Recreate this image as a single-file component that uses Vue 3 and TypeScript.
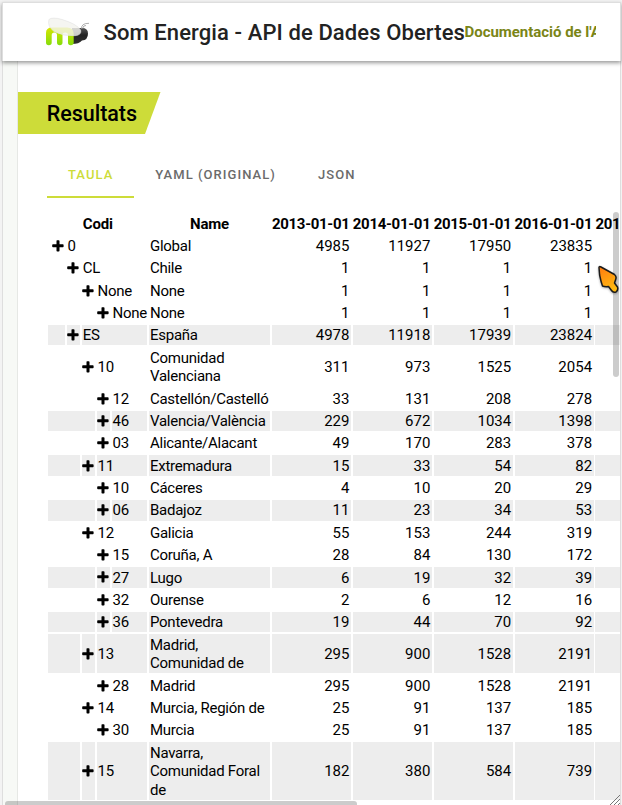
<script setup lang="ts">
interface Row {
  level: number
  code: string
  name: string
  values: number[]
  lines?: number
  shaded?: boolean
}

const dates: string[] = ['2013-01-01', '2014-01-01', '2015-01-01', '2016-01-01', '2017-01-01']

const rows: Row[] = [
  { level: 0, code: '0', name: 'Global', values: [4985, 11927, 17950, 23835] },
  { level: 1, code: 'CL', name: 'Chile', values: [1, 1, 1, 1] },
  { level: 2, code: 'None', name: 'None', values: [1, 1, 1, 1] },
  { level: 3, code: 'None', name: 'None', values: [1, 1, 1, 1] },
  { level: 1, code: 'ES', name: 'España', values: [4978, 11918, 17939, 23824], shaded: true },
  { level: 2, code: '10', name: 'Comunidad Valenciana', values: [311, 973, 1525, 2054], lines: 2 },
  { level: 3, code: '12', name: 'Castellón/Castelló', values: [33, 131, 208, 278] },
  { level: 3, code: '46', name: 'Valencia/València', values: [229, 672, 1034, 1398], shaded: true },
  { level: 3, code: '03', name: 'Alicante/Alacant', values: [49, 170, 283, 378] },
  { level: 2, code: '11', name: 'Extremadura', values: [15, 33, 54, 82], shaded: true },
  { level: 3, code: '10', name: 'Cáceres', values: [4, 10, 20, 29] },
  { level: 3, code: '06', name: 'Badajoz', values: [11, 23, 34, 53], shaded: true },
  { level: 2, code: '12', name: 'Galicia', values: [55, 153, 244, 319] },
  { level: 3, code: '15', name: 'Coruña, A', values: [28, 84, 130, 172] },
  { level: 3, code: '27', name: 'Lugo', values: [6, 19, 32, 39], shaded: true },
  { level: 3, code: '32', name: 'Ourense', values: [2, 6, 12, 16] },
  { level: 3, code: '36', name: 'Pontevedra', values: [19, 44, 70, 92], shaded: true },
  { level: 2, code: '13', name: 'Madrid, Comunidad de', values: [295, 900, 1528, 2191], lines: 2, shaded: true },
  { level: 3, code: '28', name: 'Madrid', values: [295, 900, 1528, 2191] },
  { level: 2, code: '14', name: 'Murcia, Región de', values: [25, 91, 137, 185] },
  { level: 3, code: '30', name: 'Murcia', values: [25, 91, 137, 185] },
  { level: 2, code: '15', name: 'Navarra, Comunidad Foral de', values: [182, 380, 584, 739], lines: 3, shaded: true },
]
</script>

<template>
  <div class="window">
    <header class="bar">
      <svg class="logo" viewBox="0 0 44 30">
        <defs>
          <linearGradient id="green" x1="0" y1="0" x2="0" y2="1">
            <stop offset="0" stop-color="#d8e600" />
            <stop offset="1" stop-color="#84dc0c" />
          </linearGradient>
          <linearGradient id="dark" x1="0" y1="0" x2="0" y2="1">
            <stop offset="0" stop-color="#555" />
            <stop offset=".45" stop-color="#222" />
            <stop offset="1" stop-color="#303030" />
          </linearGradient>
        </defs>
        <path d="M26 11H35Q42 10.500 42 16.500Q42 23 36 23.500Q33 27 26 27Z" fill="url(#dark)" />
        <path d="M0 16Q0 10.500 6 10.500H21Q27.700 10.500 27.700 17V25.500Q27.700 28.300 24.700 28.300Q22 28.300 22 25.500V18Q22 15.500 19.300 15.500Q16.500 15.500 16.500 18V25.500Q16.500 28.300 13.800 28.300Q11 28.300 11 25.500V18Q11 15.500 8.400 15.500Q5.700 15.500 5.700 18V25.500Q5.700 28.300 2.800 28.300Q0 28.300 0 25.500Z" fill="url(#green)" />
        <path d="M3 2.500Q6 -.3 16 2.500Q31 7 34.600 13Q36 18 29 18.700Q18 19.500 8 14.500Q1 9 3 2.500Z" fill="#f3f3ee" fill-opacity=".82" stroke="#e0e0e0" stroke-width=".6" />
        <path d="M35.500 12Q35 6.200 43 6.300M36.500 11.500Q37.500 8 40 8.500" fill="none" stroke="#999" stroke-width=".8" />
      </svg>
      <h1>Som Energia - API de Dades Obertes</h1>
      <a class="docs">Documentació de l'API</a>
    </header>
    <main class="page">
      <h2 class="ribbon">Resultats</h2>
      <nav class="tabs">
        <button class="tab active">TAULA</button>
        <button class="tab">YAML (ORIGINAL)</button>
        <button class="tab">JSON</button>
      </nav>
      <div class="table">
        <div class="row head">
          <div class="cell codi">Codi</div>
          <div class="cell name">Name</div>
          <div v-for="d in dates" :key="d" class="cell date">{{ d }}</div>
        </div>
        <div v-for="(r, i) in rows" :key="i" class="row" :class="['level' + r.level, 'lines' + (r.lines ?? 1), { shaded: r.shaded }]">
          <div v-if="r.level > 0" class="cell indent"></div>
          <div class="cell toggle">
            <svg viewBox="0 0 12 12"><path d="M5 .3H6.700Q7.500 .3 7.500 1.100V4.300H10.900Q11.600 4.300 11.600 5V6.500Q11.600 7.300 10.900 7.300H7.500V10.800Q7.500 11.600 6.700 11.600H5.200Q4.500 11.600 4.500 10.800V7.300H1Q.2 7.300 .2 6.500V5Q.2 4.300 1 4.300H4.500V1.100Q4.500 .3 5 .3Z" /></svg>
          </div>
          <div class="cell code">{{ r.code }}</div>
          <div class="cell name">{{ r.name }}</div>
          <div v-for="(v, j) in r.values" :key="j" class="cell num">{{ v }}</div>
          <div class="cell num"></div>
        </div>
      </div>
    </main>
    <div class="vscroll"></div>
    <div class="hscroll"></div>
    <svg class="grip" viewBox="0 0 12 12"><path d="M1 12 12 1M5 12 12 5M9 12 12 9" /></svg>
    <svg class="cursor" viewBox="0 0 24 32">
      <defs>
        <linearGradient id="flame" x1="0" y1="0" x2=".4" y2="1">
          <stop offset="0" stop-color="#ff7a10" />
          <stop offset="1" stop-color="#ffb810" />
        </linearGradient>
      </defs>
      <path d="M2 2.500Q2 1 4 2L17.500 9.500Q20 11.500 18.500 15L17.500 18L20.500 22Q21.500 25 19 27Q16 28 14.500 25.500L11.500 21.500Q8 22 5.500 21Q4 17 2.600 10Z" fill="url(#flame)" stroke="#1b1b1b" stroke-width="1.500" stroke-linejoin="round" />
    </svg>
  </div>
</template>

<style>
body {
  margin: 0;
  background: #f3f3f3;
  overflow: hidden;
}
</style>

<style scoped>
* {
  box-sizing: border-box;
}
.window {
  position: relative;
  width: 622px;
  height: 805px;
  padding: 2px 1px 0 2px;
  overflow: hidden;
  background: #f3f3f3;
  font-family: Roboto, sans-serif;
  color: #000;
}
.bar {
  position: relative;
  z-index: 1;
  display: flex;
  align-items: center;
  height: 59px;
  padding: 0 24px 0 43px;
  border: 1px solid #dedede;
  border-bottom: 0;
  background: #fff;
  box-shadow: 0 2px 4px rgba(0, 0, 0, .4);
  white-space: nowrap;
}
.logo {
  flex: none;
  width: 44px;
  height: 30px;
}
h1 {
  flex: none;
  width: 361px;
  margin: 0 0 0 13.500px;
  font-size: 22px;
  font-weight: 500;
  letter-spacing: .1px;
  color: #222;
}
.docs {
  flex: 1;
  min-width: 0;
  overflow: hidden;
  font-size: 15px;
  font-weight: 700;
  letter-spacing: -.03px;
  color: #7a8517;
}
.page {
  height: 744px;
  margin: 0;
  padding-top: 31px;
  border: 1px solid #dedede;
  border-width: 0 1px;
  background: linear-gradient(to right, #f7f9f6 14px, #e6e8e5 14px, #e6e8e5 15px, #fff 15px);
  overflow: hidden;
}
.ribbon {
  width: 142.500px;
  height: 42px;
  margin: 0 0 0 15px;
  padding-left: 28.800px;
  background: #cddc39;
  clip-path: polygon(0 0, 100% 0, 127px 100%, 0 100%);
  font-size: 21.500px;
  font-weight: 500;
  line-height: 43px;
  letter-spacing: -.04px;
  color: #000;
}
.tabs {
  display: flex;
  margin: 18px 0 0 44px;
}
.tab {
  height: 46px;
  padding: 1px 21px 0;
  border: 0;
  border-bottom: 2px solid transparent;
  background: none;
  font: 500 13px/44px Roboto, sans-serif;
  letter-spacing: 1.050px;
  color: #6b6b6b;
}
.tab.active {
  border-color: #cddc39;
  color: #cddc39;
}
.table {
  display: flex;
  flex-direction: column;
  gap: 1.875px;
  width: 630px;
  margin: 15.250px 0 0 45.400px;
  font-size: 15px;
  line-height: 18.750px;
}
.row {
  display: grid;
  gap: 1.875px;
  flex: none;
  height: 20.475px;
}
.lines2 {
  height: 39.225px;
}
.lines3 {
  height: 57.975px;
}
.head {
  grid-template-columns: 98.725px 121.125px repeat(5, 79px);
  font-weight: 700;
  letter-spacing: -.2px;
  text-align: center;
}
.level0 {
  grid-template-columns: 16.725px 80.125px 121.125px repeat(5, 79px);
}
.level1 {
  grid-template-columns: 16.925px 13.025px 65.025px 121.125px repeat(5, 79px);
}
.level2 {
  grid-template-columns: 31.825px 13.025px 50.125px 121.125px repeat(5, 79px);
}
.level3 {
  grid-template-columns: 46.725px 13.025px 35.225px 121.125px repeat(5, 79px);
}
.cell {
  display: flex;
  align-items: center;
  min-width: 0;
  padding: 1px 1px 0;
}
.code,
.row:not(.head) .name {
  letter-spacing: -.26px;
}
.code {
  padding-left: .6px;
}
.shaded .cell {
  background: #ededed;
}
.head .cell {
  justify-content: center;
}
.head .date {
  padding: 1px 1.500px 0 0;
  letter-spacing: -.3px;
  white-space: nowrap;
}
.toggle {
  justify-content: flex-end;
  padding-right: .9px;
  padding-top: 0;
}
.toggle svg {
  flex: none;
  width: 12px;
  height: 12px;
}
.num {
  justify-content: flex-end;
  padding-right: 1.500px;
}
.vscroll {
  position: absolute;
  z-index: 2;
  top: 212px;
  left: 613px;
  width: 6px;
  height: 165px;
  border-radius: 3px;
  background: rgba(0, 0, 0, .2);
}
.hscroll {
  position: absolute;
  top: 801px;
  left: 5px;
  width: 352px;
  height: 6px;
  border-radius: 3px;
  background: rgba(0, 0, 0, .2);
}
.grip {
  position: absolute;
  top: 794px;
  left: 608px;
  width: 12px;
  height: 12px;
  fill: none;
  stroke: #777;
}
.cursor {
  position: absolute;
  z-index: 3;
  top: 265px;
  left: 597px;
  width: 24px;
  height: 32px;
  filter: drop-shadow(0 1px 1px rgba(0, 0, 0, .3));
}
</style>
